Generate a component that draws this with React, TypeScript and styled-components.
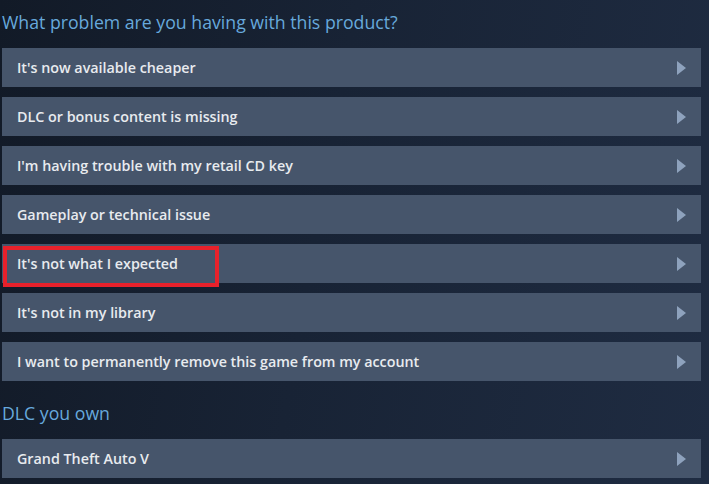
import React from "react";
import styled, { createGlobalStyle } from "styled-components";

const GlobalStyle = createGlobalStyle`
  html, body {
    margin: 0;
    padding: 0;
    background: #ffffff;
  }
  body {
    font-family: "Open Sans", "Liberation Sans", Arial, sans-serif;
  }
`;

const Page = styled.div`
  width: 709px;
  height: 484px;
  overflow: hidden;
  box-sizing: border-box;
  padding: 10px 8px 0 2px;
  background: linear-gradient(100deg, #121a27 0%, #182335 45%, #1f2c42 100%);
`;

const SectionTitle = styled.h2`
  margin: 0 0 14px 0;
  font-size: 17.7px;
  line-height: 24px;
  font-weight: 400;
  color: #67a9dc;
`;

const List = styled.div`
  display: flex;
  flex-direction: column;
  gap: 10px;
  margin-bottom: 20px;
`;

const Row = styled.div`
  position: relative;
  display: flex;
  align-items: center;
  justify-content: space-between;
  height: 39px;
  padding: 0 15px 0 15px;
  background: #46556b;
  color: #e8ebef;
  font-size: 14.3px;
  font-weight: 600;
  cursor: pointer;
`;

const Arrow = styled.span`
  width: 0;
  height: 0;
  border-top: 7px solid transparent;
  border-bottom: 7px solid transparent;
  border-left: 9px solid #8ea2bd;
`;

const Highlight = styled.span`
  position: absolute;
  left: 1px;
  top: 2px;
  width: 216px;
  height: 41px;
  box-sizing: border-box;
  border: 4px solid #e8212b;
  pointer-events: none;
`;

const problems = [
  "It's now available cheaper",
  "DLC or bonus content is missing",
  "I'm having trouble with my retail CD key",
  "Gameplay or technical issue",
  "It's not what I expected",
  "It's not in my library",
  "I want to permanently remove this game from my account",
];

const App = () => {
  return (
    <>
      <GlobalStyle />
      <Page>
        <SectionTitle>What problem are you having with this product?</SectionTitle>
        <List>
          {problems.map((p, i) => (
            <Row key={p}>
              <span>{p}</span>
              <Arrow />
              {i === 4 && <Highlight />}
            </Row>
          ))}
        </List>
        <SectionTitle>DLC you own</SectionTitle>
        <List>
          <Row>
            <span>Grand Theft Auto V</span>
            <Arrow />
          </Row>
        </List>
      </Page>
    </>
  );
};

export default App;
